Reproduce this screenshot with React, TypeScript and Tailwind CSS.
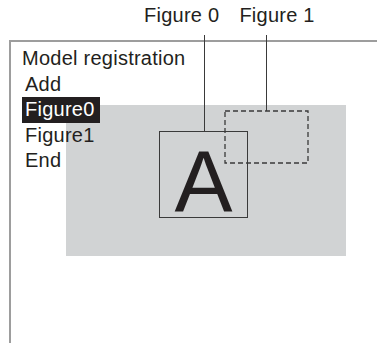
import React from "react"

const FONT = { fontFamily: '"Liberation Sans", Arial, sans-serif' }

const MENU = ["Add", "Figure0", "Figure1", "End"]

export default function App() {
  return (
    <div className="relative h-[343px] w-[377px] overflow-hidden bg-white text-[#231f20] tracking-[0.25px]" style={FONT}>
      {/* callout labels */}
      <div className="flex h-[40px] items-start pl-[144px] pt-[4px] text-[20px] leading-[22px]">
        <span>Figure 0</span>
        <span className="ml-[20px]">Figure 1</span>
      </div>

      {/* screen frame */}
      <div className="relative ml-[9px] h-[303px] border-l-2 border-t-2 border-[#9d9d9d]">
        {/* camera image area */}
        <div className="absolute left-[55px] top-[63px] h-[151px] w-[280px] bg-[#d1d3d4]" />

        {/* figure 0 */}
        <div className="absolute left-[148px] top-[89px] flex h-[87px] w-[89px] items-center justify-center border-[1.5px] border-[#3a3a3a]">
          <span className="mt-[13px] text-[87px] leading-none tracking-normal">A</span>
        </div>

        {/* figure 1 */}
        <svg className="absolute left-[213px] top-[68px]" width="85" height="55">
          <rect x="1" y="1" width="83" height="52" fill="none" stroke="#3a3a3a" strokeWidth="1.3" strokeDasharray="5 3" />
        </svg>

        {/* menu */}
        <div className="relative pl-[11px] pt-[4px] text-[20px] leading-[25.5px]">
          <div>Model registration</div>
          {MENU.map((m) => (
            <div key={m} className="pl-[3px]">
              <span className={m === "Figure0" ? "-ml-[3px] inline-block bg-[#231f20] pl-[3px] pr-[5px] text-white" : ""}>{m}</span>
            </div>
          ))}
        </div>
      </div>

      {/* leader lines */}
      <div className="absolute left-[204px] top-[35px] h-[97px] w-[1.3px] bg-[#3a3a3a]" />
      <div className="absolute left-[266px] top-[35px] h-[76px] w-[1.3px] bg-[#3a3a3a]" />
    </div>
  )
}
